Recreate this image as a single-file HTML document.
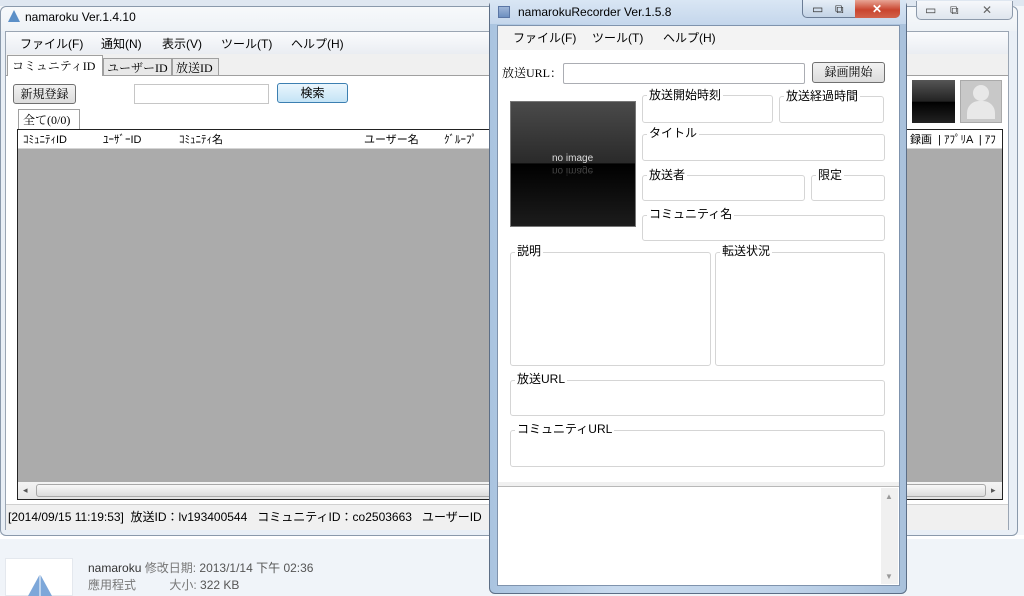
<!DOCTYPE html>
<html><head><meta charset="utf-8"><style>
*{margin:0;padding:0;box-sizing:border-box}
body{width:1024px;height:596px;overflow:hidden;position:relative;background:#f3f6fa;font-family:"Liberation Sans","Noto Sans CJK JP",sans-serif;font-size:12px;color:#000}
.a{position:absolute}
.t{position:absolute;white-space:nowrap;line-height:14px}
.gb{position:absolute;border:1px solid #d5d5d5;border-radius:3px}
.gl{position:absolute;background:#fff;padding:0 2px;line-height:14px;white-space:nowrap}
.btn{position:absolute;border:1px solid #707070;border-radius:3px;background:linear-gradient(#f2f2f2,#dcdcdc);text-align:center;line-height:18px}
</style></head><body>
<!-- desktop top strip -->
<div class="a" style="left:0;top:0;width:1024px;height:6px;background:#dfe7f1"></div>
<!-- explorer details -->
<div class="a" style="left:0;top:538px;width:1024px;height:58px;background:#f0f4f9;border-top:1px solid #dde5ee"></div>
<div class="a" style="left:0;top:535px;width:1024px;height:4px;background:#fff"></div>
<div class="a" style="left:5px;top:558px;width:68px;height:38px;background:#fff;border:1px solid #e4e8ee"></div>
<svg class="a" style="left:26px;top:574px" width="28" height="22"><polygon points="14,0 26,22 2,22" fill="#7da7d9"/><line x1="14" y1="0" x2="14" y2="22" stroke="#fff"/></svg>
<div class="t" style="left:88px;top:561px;font-size:12px;color:#333">namaroku <span style="color:#777">修改日期:</span> <span style="color:#555">2013/1/14 下午 02:36</span></div>
<div class="t" style="left:88px;top:578px;color:#777">應用程式 &nbsp; &nbsp; &nbsp; &nbsp; &nbsp;大小: <span style="color:#555">322 KB</span></div>

<!-- main window -->
<div class="a" style="left:0;top:6px;width:1018px;height:530px;background:#e9eff6;border:1px solid #8a99ab;border-radius:6px"></div>
<div class="a" style="left:1px;top:7px;width:1016px;height:24px;background:linear-gradient(#f7f9fb,#eef2f6);border-radius:6px 6px 0 0"></div>
<svg class="a" style="left:7px;top:10px" width="14" height="12"><polygon points="7,0 13,12 1,12" fill="#5b8fc7"/></svg>
<div class="t" style="left:25px;top:10px;font-size:12px">namaroku Ver.1.4.10</div>
<div class="a" style="left:916px;top:1px;width:97px;height:19px;border:1px solid #8d9aab;border-top:none;border-radius:0 0 5px 5px;background:linear-gradient(#f6f8fb,#dfe6ee)"></div>
<div class="t" style="left:925px;top:3px;color:#444">▭</div><div class="t" style="left:950px;top:3px;color:#444">⧉</div><div class="t" style="left:982px;top:3px;color:#666">✕</div>
<div class="a" style="left:5px;top:31px;width:1004px;height:499px;background:#f0f0f0;border:1px solid #9aa5b3"></div>
<div class="a" style="left:6px;top:32px;width:1002px;height:22px;background:linear-gradient(#fafbfd,#eaedf2)"></div>
<div class="t" style="left:20px;top:37px">ファイル(F)</div><div class="t" style="left:101px;top:37px">通知(N)</div><div class="t" style="left:162px;top:37px">表示(V)</div><div class="t" style="left:221px;top:37px">ツール(T)</div><div class="t" style="left:291px;top:37px">ヘルプ(H)</div>
<!-- tabs -->
<div class="a" style="left:6px;top:75px;width:1002px;height:1px;background:#a0a0a0"></div>
<div class="a" style="left:7px;top:55px;width:96px;height:21px;background:#fff;border:1px solid #a0a0a0;border-bottom:none"></div>
<div class="t" style="left:12px;top:59px;font-family:'Liberation Serif','Noto Serif CJK SC',serif">コミュニティID</div>
<div class="a" style="left:103px;top:58px;width:69px;height:18px;background:#e8e8e8;border:1px solid #a0a0a0"></div>
<div class="t" style="left:107px;top:61px;font-family:'Liberation Serif','Noto Serif CJK SC',serif">ユーザーID</div>
<div class="a" style="left:172px;top:58px;width:47px;height:18px;background:#e8e8e8;border:1px solid #a0a0a0"></div>
<div class="t" style="left:176px;top:61px;font-family:'Liberation Serif','Noto Serif CJK SC',serif">放送ID</div>
<div class="a" style="left:6px;top:76px;width:1002px;height:428px;background:#fff"></div>
<div class="btn" style="left:13px;top:84px;width:63px;height:20px;font-family:'Liberation Serif','Noto Serif CJK SC',serif">新規登録</div>
<div class="a" style="left:134px;top:84px;width:135px;height:20px;border:1px solid #c6c6c6;background:#fff"></div>
<div class="btn" style="left:277px;top:83px;width:71px;height:20px;border-color:#3c7fb1;background:linear-gradient(#eaf6fd,#c4e4f6)">検索</div>
<div class="a" style="left:18px;top:109px;width:62px;height:21px;background:#fff;border:1px solid #a0a0a0;border-bottom:none"></div>
<div class="t" style="left:23px;top:113px;font-family:'Liberation Serif','Noto Serif CJK SC',serif">全て(0/0)</div>
<div class="a" style="left:17px;top:129px;width:986px;height:371px;border:1px solid #222;background:#ababab"></div>
<div class="a" style="left:18px;top:130px;width:984px;height:19px;background:#fff;border-bottom:1px solid #d5d5d5"></div>
<div class="t" style="left:23px;top:133px;font-size:11px">ｺﾐｭﾆﾃｨID</div>
<div class="t" style="left:103px;top:133px;font-size:11px">ﾕｰｻﾞｰID</div>
<div class="t" style="left:179px;top:133px;font-size:11px">ｺﾐｭﾆﾃｨ名</div>
<div class="t" style="left:364px;top:133px;font-size:11px">ユーザー名</div>
<div class="t" style="left:444px;top:133px;font-size:11px">ｸﾞﾙｰﾌﾟ</div>
<div class="t" style="left:910px;top:133px;font-size:11px">録画 &nbsp;| ｱﾌﾟﾘA &nbsp;| ｱﾌ</div>
<div class="a" style="left:912px;top:80px;width:43px;height:43px;background:linear-gradient(#555,#222 50%,#000 51%,#222)"></div>
<div class="a" style="left:960px;top:80px;width:42px;height:43px;background:#c8c8c8;border:1px solid #aaa"></div>
<div class="a" style="left:973px;top:85px;width:16px;height:16px;border-radius:50%;background:#e8e8e8"></div>
<div class="a" style="left:967px;top:101px;width:28px;height:18px;border-radius:12px 12px 0 0;background:#e8e8e8"></div>
<div class="a" style="left:18px;top:482px;width:984px;height:17px;background:linear-gradient(#f4f4f4,#e4e4e4)"></div>
<div class="a" style="left:36px;top:484px;width:950px;height:13px;border:1px solid #a8a8a8;border-radius:3px;background:linear-gradient(#f8f8f8,#dcdcdc)"></div>
<div class="t" style="left:23px;top:483px;font-size:9px;color:#555">◂</div><div class="t" style="left:991px;top:483px;font-size:9px;color:#555">▸</div>
<div class="a" style="left:6px;top:504px;width:1002px;height:26px;background:#f0f0f0;border-top:1px solid #d0d0d0"></div>
<div class="t" style="left:8px;top:510px">[2014/09/15 11:19:53]&nbsp; 放送ID：lv193400544 &nbsp;&nbsp;コミュニティID：co2503663 &nbsp;&nbsp;ユーザーID</div>

<!-- recorder window -->
<div class="a" style="left:489px;top:0;width:418px;height:594px;border:1px solid #5c6e86;border-radius:6px;background:linear-gradient(90deg,#aac4e0,#c8daee 30%,#c0d4ea 70%,#a9c1dc)"></div>
<div class="a" style="left:490px;top:0;width:416px;height:24px;background:linear-gradient(#d9e6f4,#c5d7ec)"></div>
<div class="a" style="left:498px;top:6px;width:12px;height:12px;background:linear-gradient(#9fb6d8,#6d8fc0);border:1px solid #5a76a5"></div>
<div class="t" style="left:518px;top:5px;font-size:12px">namarokuRecorder Ver.1.5.8</div>
<div class="a" style="left:802px;top:0;width:98px;height:18px;border:1px solid #6a7c95;border-top:none;border-radius:0 0 5px 5px;background:linear-gradient(#e6eef7,#c3d3e6)"></div>
<div class="a" style="left:855px;top:0;width:45px;height:18px;border-radius:0 0 5px 0;background:linear-gradient(#e8a595,#c9452f 55%,#d2624b)"></div>
<div class="t" style="left:812px;top:2px;color:#333">▭</div><div class="t" style="left:835px;top:2px;color:#333">⧉</div><div class="t" style="left:872px;top:2px;color:#fff;font-weight:bold">✕</div>
<div class="a" style="left:497px;top:25px;width:403px;height:561px;background:#fff;border:1px solid #7f93ad"></div>
<div class="a" style="left:498px;top:26px;width:401px;height:24px;background:#f3f3f3"></div>
<div class="t" style="left:513px;top:31px">ファイル(F)</div><div class="t" style="left:592px;top:31px">ツール(T)</div><div class="t" style="left:663px;top:31px">ヘルプ(H)</div>
<div class="t" style="left:502px;top:66px;font-family:'Liberation Serif','Noto Serif CJK SC',serif">放送URL：</div>
<div class="a" style="left:563px;top:63px;width:242px;height:21px;border:1px solid #abadb3;border-radius:2px"></div>
<div class="btn" style="left:812px;top:62px;width:73px;height:21px;font-family:'Liberation Serif','Noto Serif CJK SC',serif">録画開始</div>
<div class="a" style="left:510px;top:101px;width:126px;height:126px;background:linear-gradient(#4a4a4a,#2a2a2a 49%,#000 50%,#1c1c1c);border:1px solid #777"></div>
<div class="t" style="left:552px;top:152px;color:#ddd;font-size:10px">no image</div>
<div class="t" style="left:552px;top:163px;color:#444;font-size:10px;transform:scaleY(-1)">no image</div>
<div class="gb" style="left:642px;top:95px;width:131px;height:28px"></div><div class="gl" style="left:647px;top:88px">放送開始時刻</div>
<div class="gb" style="left:779px;top:96px;width:105px;height:27px"></div><div class="gl" style="left:784px;top:89px">放送経過時間</div>
<div class="gb" style="left:642px;top:134px;width:243px;height:27px"></div><div class="gl" style="left:647px;top:126px">タイトル</div>
<div class="gb" style="left:642px;top:175px;width:163px;height:26px"></div><div class="gl" style="left:647px;top:168px">放送者</div>
<div class="gb" style="left:811px;top:175px;width:74px;height:26px"></div><div class="gl" style="left:816px;top:168px">限定</div>
<div class="gb" style="left:642px;top:215px;width:243px;height:26px"></div><div class="gl" style="left:647px;top:207px">コミュニティ名</div>
<div class="gb" style="left:510px;top:252px;width:201px;height:114px"></div><div class="gl" style="left:515px;top:244px">説明</div>
<div class="gb" style="left:715px;top:252px;width:170px;height:114px"></div><div class="gl" style="left:720px;top:244px">転送状況</div>
<div class="gb" style="left:510px;top:380px;width:375px;height:36px"></div><div class="gl" style="left:515px;top:372px">放送URL</div>
<div class="gb" style="left:510px;top:430px;width:375px;height:37px"></div><div class="gl" style="left:515px;top:422px">コミュニティURL</div>
<div class="a" style="left:498px;top:482px;width:401px;height:5px;background:#f0f0f0;border-bottom:1px solid #b8b8b8"></div>
<div class="a" style="left:881px;top:488px;width:17px;height:96px;background:#f0f0f0"></div>
<div class="t" style="left:885px;top:490px;font-size:8px;color:#999">▲</div><div class="t" style="left:885px;top:570px;font-size:8px;color:#999">▼</div>
</body></html>
